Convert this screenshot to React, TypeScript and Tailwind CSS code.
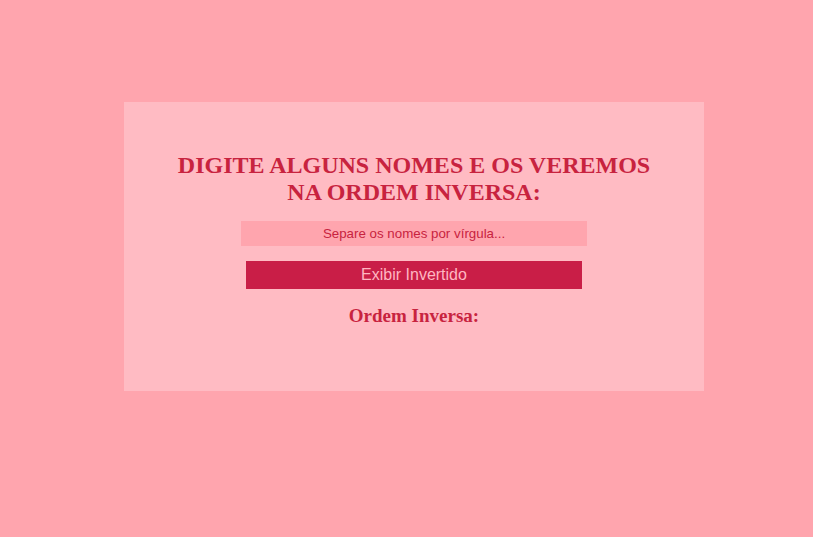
export default function App() {
  return (
    <div className="min-h-[537px] w-full bg-[#ffa5ae] pt-[102px]">
      <div className="ml-[124px] flex h-[289px] w-[580px] flex-col items-center bg-[#ffbbc3] pt-[50px]">
        <h2 className="text-center font-['Liberation_Serif',serif] text-[24px] font-bold leading-[27px] text-[#c8233f]">
          DIGITE ALGUNS NOMES E OS VEREMOS
          <br />
          NA ORDEM INVERSA:
        </h2>
        <input
          type="text"
          placeholder="Separe os nomes por vírgula..."
          className="mt-[15px] h-[25px] w-[346px] bg-[#ffa5ae] text-center font-['Liberation_Sans',sans-serif] text-[13.33px] text-[#c8233f] outline-none placeholder:text-[#c8233f]"
        />
        <button className="mt-[15px] h-[28px] w-[336px] bg-[#c91e47] font-['Liberation_Sans',sans-serif] text-[16px] text-[#ffb6c1]">
          Exibir Invertido
        </button>
        <h3 className="mt-[16px] text-center font-['Liberation_Serif',serif] text-[19px] font-bold leading-[22px] text-[#c8233f]">
          Ordem Inversa:
        </h3>
      </div>
    </div>
  )
}
